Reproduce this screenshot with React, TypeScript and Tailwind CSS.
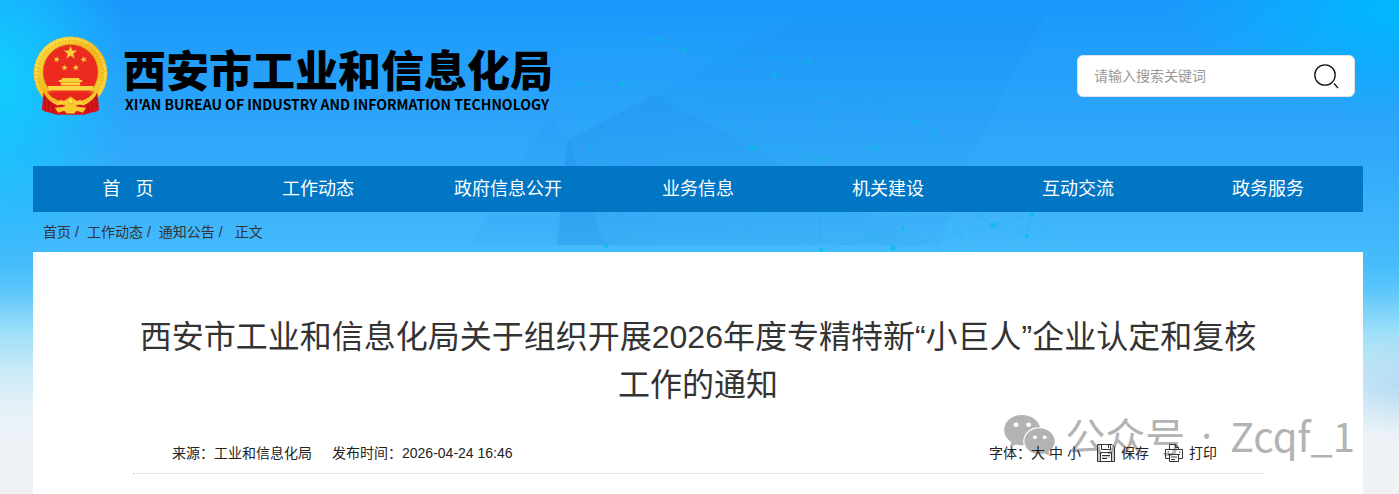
import { FaWeixin } from "react-icons/fa";

const navItems = [
  { label: "首\u00a0\u00a0\u00a0页", href: "#home" },
  { label: "工作动态", href: "#news" },
  { label: "政府信息公开", href: "#open" },
  { label: "业务信息", href: "#business" },
  { label: "机关建设", href: "#building" },
  { label: "互动交流", href: "#interact" },
  { label: "政务服务", href: "#service" },
];

const dots = [
  [656, 39, 2], [684, 50, 2], [809, 61, 2], [775, 75, 2], [822, 96, 2], [579, 83, 2], [622, 84, 2.5],
  [703, 104, 1.5], [917, 122, 2], [934, 132, 2], [752, 148, 2.5], [876, 148, 2], [819, 160, 2],
  [591, 149, 1.5], [606, 246, 2], [821, 250, 2], [893, 248, 2.8], [903, 229, 1.8], [993, 225, 2.8],
  [1027, 236, 2.2], [1032, 214, 2.2],
];

const lines = [
  "M520 53L656 39L809 61L934 132L1032 214L1070 262",
  "M656 39L775 75L917 122L934 132",
  "M550 50L684 50L809 61L775 75L622 84L579 83",
  "M684 50L775 75L876 148L993 225",
  "M622 84L819 160L876 148L917 122",
  "M656 39L622 84L591 149M579 83L591 149L606 246",
  "M703 104L822 96L819 160L821 250",
  "M752 148L876 148L893 248M752 148L775 75",
  "M703 104L752 148L745 258M550 160L752 148L819 160",
  "M606 246L752 148M591 149L640 258",
  "M821 250L903 229L934 132L940 200L975 258",
  "M821 250L755 212M893 248L840 210L752 148",
  "M893 248L993 225L1032 214L1027 236L934 132",
  "M993 225L1027 236L1010 258M903 229L945 252M870 258L893 248",
];

function Backdrop() {
  return (
    <svg
      className="absolute inset-x-0 top-0 w-full h-[252px]"
      viewBox="0 0 1399 252"
      preserveAspectRatio="xMidYMin slice"
      aria-hidden="true"
    >
      <defs>
        <linearGradient id="facet" x1="0" y1="0" x2="1" y2="0">
          <stop offset="0" stopColor="#0b6fd0" stopOpacity=".1" />
          <stop offset="1" stopColor="#0b6fd0" stopOpacity=".03" />
        </linearGradient>
      </defs>
      <path d="M820 5H1050L965 166L940 245H555L568 140L655 95Z" fill="#0b6fd0" opacity=".04" />
      <path d="M655 95L568 140L558 245H920L787 166Z" fill="url(#facet)" />
      <path d="M550 115L568 140L604 245H470Z" fill="#0b6fd0" opacity=".04" />
      <path d="M568 140L558 245H604Z" fill="#0b6fd0" opacity=".05" />
      <g fill="none" stroke="#00bcd4" strokeWidth="1" opacity=".22">
        {lines.map((d) => (
          <path key={d} d={d} />
        ))}
      </g>
      <g fill="#06bfe0" opacity=".75">
        {dots.map(([x, y, r]) => (
          <circle key={`${x}-${y}`} cx={x} cy={y} r={r} />
        ))}
      </g>
    </svg>
  );
}

const star = "M0-10L2.6-3.2L9.6-3.1L4 1.3L6 8.2L0 4.2L-6 8.2L-4 1.3L-9.6-3.1L-2.6-3.2Z";

function Emblem() {
  return (
    <svg className="w-[75px] h-20 shrink-0" viewBox="26 17 226 240" role="img" aria-label="国徽">
      <defs>
        <linearGradient id="gold" x1="0" y1="0" x2="1" y2="1">
          <stop offset="0" stopColor="#fbe04a" />
          <stop offset=".5" stopColor="#f3b81c" />
          <stop offset="1" stopColor="#fbd53a" />
        </linearGradient>
      </defs>
      <circle cx="139" cy="129" r="111" fill="url(#gold)" />
      <circle cx="139" cy="129" r="97" fill="none" stroke="#d9950f" strokeWidth="14" strokeDasharray="3 8" opacity=".25" />
      <circle cx="139" cy="129" r="104" fill="none" stroke="#ffef7a" strokeWidth="4" strokeDasharray="7 5" opacity=".7" />
      <circle cx="139" cy="125" r="83" fill="#ec2a20" stroke="#cf8a12" strokeWidth="2" />
      {/* Stars */}
      <g fill="#fbd23c" stroke="#c9781a" strokeWidth=".6">
        <path d={star} transform="translate(139 67) scale(2.1)" />
        <path d={star} transform="translate(97 87) rotate(15)" />
        <path d={star} transform="translate(179 87) rotate(-15)" />
        <path d={star} transform="translate(121 112) rotate(10)" />
        <path d={star} transform="translate(155 112) rotate(-10)" />
      </g>
      {/* Gate */}
      <path d="M114 143H164L167 149H174V155H168V166H110V155H104V149H111Z" fill="#fbd23c" />
      <path d="M110 156H168" stroke="#e08a16" strokeWidth="2" />
      <path d="M70 167H208L204 181H74Z" fill="#fbd640" />
      <path d="M69 183H209V187H69Z" fill="#f03a24" />
      <path d="M70 187L208 187Q190 215 139 216Q88 215 70 187Z" fill="#e8261c" />
      {/* Drapes and gear */}
      <path d="M58 186Q54 222 53 238Q62 247 76 247L96 254H182L202 247Q218 247 225 238Q224 220 220 186Q206 216 172 222L139 230L106 222Q72 216 58 186Z" fill="#d9151b" />
      <path d="M62 200V238M74 214V244M86 222V248M216 200V238M204 214V244M192 222V248" stroke="#a90d14" strokeWidth="3" />
      <path d="M58 187Q75 213 101 220L110 208Q118 216 128 206L139 199L150 206Q160 216 168 208L177 220Q203 213 220 187Q208 212 178 226L160 220L139 230L118 220L100 226Q70 212 58 187Z" fill="#fbcf35" />
      <path d="M92 233L118 230L128 224L139 220L150 224L160 230L186 233L176 248L158 242L150 250H128L120 242L102 248Z" fill="#f9c92f" />
      <circle cx="139" cy="212" r="9" fill="#fbe04a" stroke="#d9950f" strokeWidth="2" />
    </svg>
  );
}

function SaveIcon() {
  return (
    <svg className="w-[18px] h-[18px]" viewBox="0 0 18 18" fill="none" stroke="#333" aria-hidden="true">
      <path d="M.5.5H15L17.500 3V17.500H.5Z" />
      <path d="M4.500.5V5.500H13.500V.5M11.500 1V4M3.500 17V8.500H14.500V17M5 11.500H13M5 14.500H10" />
      <path d="M2 1V17M16 3V17M5 13H13" stroke="#999" />
    </svg>
  );
}

function PrintIcon() {
  return (
    <svg className="w-[18px] h-[18px]" viewBox="0 0 18 18" fill="none" stroke="#333" aria-hidden="true">
      <path d="M4.500 5.500V.5H10.500L13.500 3.500V5.500M10.500.5V3.500H13.500" />
      <path d="M4 14.500H.5V5.500H17.500V14.500H14M2.500 8H4M14 8H15.500" />
      <path d="M3 10.500H15M4.500 10.500V17.500H13.500V10.500M6 13H12M6 15.500H10" />
    </svg>
  );
}

export default function App() {
  return (
    <div className="relative min-h-screen flex flex-col pl-[33px] pr-9 overflow-hidden font-['Liberation_Sans','Noto_Sans_CJK_SC',sans-serif] text-sm text-[#222] bg-[radial-gradient(ellipse_130px_190px_at_0_80px,#10cdff_0%,#10cdff00_100%),radial-gradient(ellipse_230px_110px_at_100%_10px,#00b8ff_0%,#00b8ff00_100%),radial-gradient(ellipse_80px_50px_at_100%_385px,#a8d4f0b0_0%,#a8d4f000_100%),linear-gradient(180deg,#1a98fb_0px,#30a8fa_150px,#47bcfc_265px,#5cc6fb_290px,#9adef8_330px,#c4e9f7_365px,#e3f1f8_405px,#edf2f7_440px,#eff2f5_494px)]">
      <Backdrop />

      {/* Header */}
      <header className="relative h-[166px] flex items-start justify-between pr-2">
        <a href="#home" className="flex items-start gap-[15px] pt-9 text-black">
          <Emblem />
          <div className="pt-3">
            <div className="text-[43px] leading-[48px] font-black whitespace-nowrap">西安市工业和信息化局</div>
            <div className="pl-0.5 font-['Noto_Sans_CJK_SC',sans-serif] text-sm leading-4 font-bold whitespace-nowrap">
              XI'AN BUREAU OF INDUSTRY AND INFORMATION TECHNOLOGY
            </div>
          </div>
        </a>
        <form className="mt-[55px] w-[278px] h-[42px] flex items-center bg-white border border-[#e2e2e2] rounded-md pl-4 pr-[15px]">
          <input
            type="text"
            aria-label="搜索"
            placeholder="请输入搜索关键词"
            className="flex-1 min-w-0 h-full bg-transparent outline-none text-sm placeholder:text-[#999]"
          />
          <button type="button" aria-label="搜索" className="w-[26px] h-[26px]">
            <svg viewBox="0 0 26 26" fill="none" stroke="#111" strokeWidth="1.3">
              <circle cx="12" cy="12" r="10.200" />
              <path d="M21 20.500L25 25" />
            </svg>
          </button>
        </form>
      </header>

      {/* Nav */}
      <nav className="relative grid grid-cols-7 h-[46px] bg-[#0076c5]">
        {navItems.map((item) => (
          <a key={item.href} href={item.href} className="flex items-center justify-center text-lg text-white">
            {item.label}
          </a>
        ))}
      </nav>

      {/* Breadcrumb */}
      <div className="relative h-10 flex items-center pl-2.5 text-[#333]">
        <a href="#home">首页</a>
        <span className="ml-1 mr-2">/</span>
        <a href="#news">工作动态</a>
        <span className="ml-1 mr-2">/</span>
        <a href="#notice">通知公告</a>
        <span className="ml-1 mr-3">/</span>
        <span>正文</span>
      </div>

      {/* Article */}
      <main className="relative flex-1 bg-white px-[100px] pt-[61px]">
        <div
          className="absolute right-2 top-[156px] flex items-center text-[#b3b3b3] font-['Noto_Sans_CJK_SC',sans-serif] text-[40px] leading-[54px] whitespace-nowrap"
          aria-hidden="true"
        >
          <FaWeixin className="w-[53px] h-[53px]" />
          <span className="ml-[9px]">公众号</span>
          <span className="ml-4 mr-[18px] font-['Noto_Sans',sans-serif]">·</span>
          <span>Zcqf_1</span>
        </div>
        <h1 className="text-[32px] leading-[48px] text-center text-[#333]">
          西安市工业和信息化局关于组织开展2026年度专精特新“小巨人”企业认定和复核工作的通知
        </h1>
        <div className="relative mt-[23px] h-[42px] flex items-center justify-between pl-[39px] pr-[46px] border-b border-dotted border-[#ccc]">
          <div className="flex gap-5">
            <span>来源：工业和信息化局</span>
            <span>发布时间：2026-04-24 16:46</span>
          </div>
          <div className="flex items-center">
            <span>字体：</span>
            <div className="flex gap-1">
              <button type="button">大</button>
              <button type="button">中</button>
              <button type="button">小</button>
            </div>
            <button type="button" className="ml-4 flex items-center gap-1.5">
              <SaveIcon />
              保存
            </button>
            <button type="button" className="ml-4 flex items-center gap-1.5">
              <PrintIcon />
              打印
            </button>
          </div>
        </div>
      </main>
    </div>
  );
}
